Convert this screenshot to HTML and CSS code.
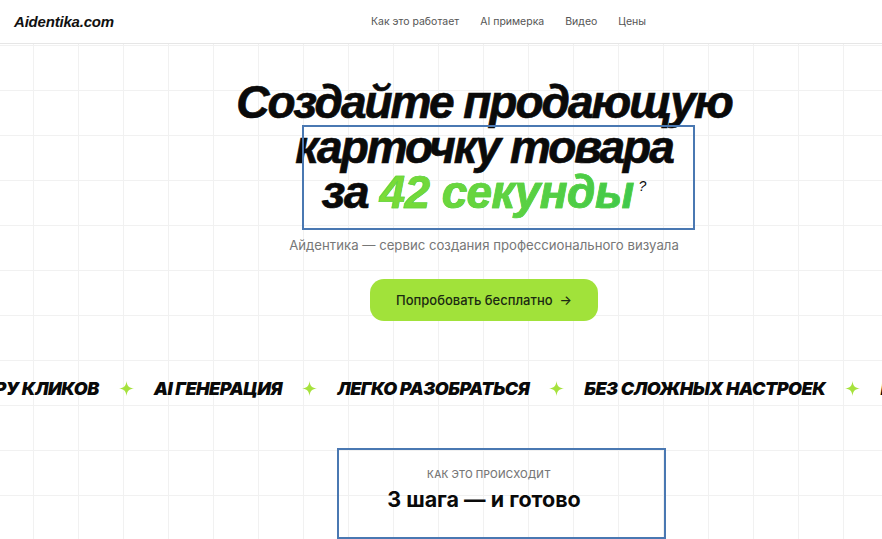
FILE: index.html
```html
<!DOCTYPE html>
<html lang="ru">
<head>
    <meta charset="UTF-8">
    <meta name="viewport" content="width=device-width, initial-scale=1.0">
    <title>Aidentika.com</title>
    <link rel="stylesheet" href="styles.css">
</head>
<body>
    <header class="header">
        <a class="logo" href="#">Aidentika.com</a>
        <nav class="nav">
            <a href="#">Как это работает</a>
            <a href="#">AI примерка</a>
            <a href="#">Видео</a>
            <a href="#">Цены</a>
        </nav>
    </header>

    <main>
        <section class="hero">
            <h1 class="hero-title">
                Создайте продающую<br>
                карточку товара<br>
                <span class="lead">за</span> <span class="accent">42 секунды</span><sup class="q">?</sup>
            </h1>
            <p class="hero-sub">Айдентика — сервис создания профессионального визуала</p>
            <a class="btn" href="#">Попробовать бесплатно <span class="arrow">→</span></a>
        </section>

        <div class="marquee">
            <div class="track">
                <span class="tag">В ПАРУ КЛИКОВ</span>
                <svg class="star" viewBox="0 0 14 14"><path d="M7 0C7.5 4.6 9.4 6.5 14 7C9.4 7.5 7.5 9.4 7 14C6.5 9.4 4.6 7.5 0 7C4.6 6.5 6.5 4.6 7 0Z"/></svg>
                <span class="tag">AI ГЕНЕРАЦИЯ</span>
                <svg class="star" viewBox="0 0 14 14"><path d="M7 0C7.5 4.6 9.4 6.5 14 7C9.4 7.5 7.5 9.4 7 14C6.5 9.4 4.6 7.5 0 7C4.6 6.5 6.5 4.6 7 0Z"/></svg>
                <span class="tag">ЛЕГКО РАЗОБРАТЬСЯ</span>
                <svg class="star" viewBox="0 0 14 14"><path d="M7 0C7.5 4.6 9.4 6.5 14 7C9.4 7.5 7.5 9.4 7 14C6.5 9.4 4.6 7.5 0 7C4.6 6.5 6.5 4.6 7 0Z"/></svg>
                <span class="tag">БЕЗ СЛОЖНЫХ НАСТРОЕК</span>
                <svg class="star" viewBox="0 0 14 14"><path d="M7 0C7.5 4.6 9.4 6.5 14 7C9.4 7.5 7.5 9.4 7 14C6.5 9.4 4.6 7.5 0 7C4.6 6.5 6.5 4.6 7 0Z"/></svg>
                <span class="tag">БЫСТРЫЙ РЕЗУЛЬТАТ</span>
            </div>
        </div>

        <section class="steps">
            <p class="eyebrow">КАК ЭТО ПРОИСХОДИТ</p>
            <h2 class="steps-title">3 шага — и готово</h2>
        </section>
    </main>

    <!-- annotation frames -->
    <div class="frame frame-title"></div>
    <div class="frame frame-steps"></div>
</body>
</html>
```

FILE: styles.css
```css
html, body {
    margin: 0;
    padding: 0;
}
body {
    font-family: Inter, "Liberation Sans", sans-serif;
    color: #111;
    background-color: #fff;
    background-image:
        linear-gradient(to right, #f1f1f1 1px, transparent 1px),
        linear-gradient(to bottom, #f1f1f1 1px, transparent 1px);
    background-size: 45px 45px;
    background-position: 33px 0;
    overflow: hidden;
    height: 539px;
    position: relative;
}
a {
    text-decoration: none;
    color: inherit;
}

/* header */
.header {
    height: 44px;
    display: flex;
    align-items: center;
    padding: 0 14px;
    background: #fff;
    border-bottom: 1px solid #e6e6e6;
    box-sizing: border-box;
}
.logo {
    font-family: "Liberation Sans", Arial, sans-serif;
    font-weight: 700;
    font-style: italic;
    font-size: 15px;
    letter-spacing: -0.2px;
    color: #111;
}
.nav {
    display: flex;
    gap: 21px;
    margin-left: 257px;
    font-size: 10.5px;
    color: #555;
}

/* hero */
.hero {
    display: flex;
    flex-direction: column;
    align-items: center;
    padding: 36px 0 0 86px;
}
.hero-title {
    margin: 0;
    font-family: "Liberation Sans", Arial, sans-serif;
    font-weight: 700;
    font-style: italic;
    font-size: 46px;
    line-height: 45px;
    letter-spacing: -2px;
    -webkit-text-stroke: 0.7px #0a0a0a;
    text-align: center;
    color: #0a0a0a;
}
.lead {
    letter-spacing: -1px;
}
.accent {
    background: linear-gradient(90deg, #7ddc36, #3fc84c);
    -webkit-background-clip: text;
    background-clip: text;
    color: transparent;
    letter-spacing: -0.6px;
    -webkit-text-stroke: 0.7px #5ad242;
}
.q {
    font-size: 14px;
    font-weight: 400;
    letter-spacing: 0;
    -webkit-text-stroke: 0;
    vertical-align: top;
    position: relative;
    top: -6px;
    margin-left: 5px;
}
.hero-sub {
    margin: 22px 0 0;
    font-size: 13.2px;
    color: #777;
}
.btn {
    margin-top: 26px;
    display: flex;
    align-items: center;
    gap: 7px;
    height: 42px;
    padding: 0 26px;
    border-radius: 14px;
    background: #a1e23a;
    color: #1b2a12;
    font-size: 13px;
    font-weight: 500;
}
.arrow {
    font-size: 13px;
}

/* marquee */
.marquee {
    margin-top: 57px;
    overflow: hidden;
    white-space: nowrap;
}
.track {
    display: flex;
    align-items: center;
    gap: 20px;
    transform: translateX(-47px);
}
.tag {
    font-family: Inter, sans-serif;
    font-weight: 900;
    font-style: italic;
    font-size: 18px;
    letter-spacing: -0.5px;
    color: #0a0a0a;
}
.star {
    width: 15px;
    height: 15px;
    fill: #a6e23d;
    flex: none;
}

/* steps */
.steps {
    display: flex;
    flex-direction: column;
    align-items: center;
    padding: 69px 0 0 86px;
}
.eyebrow {
    margin: 0;
    font-size: 10px;
    font-weight: 500;
    color: #777;
    letter-spacing: 0.2px;
    position: relative;
    left: 5px;
}
.steps-title {
    margin: 6px 0 0;
    font-size: 21.5px;
    font-weight: 700;
    color: #0a0a0a;
}

/* annotation frames */
.frame {
    position: absolute;
    border: 2px solid #4a78b2;
    box-sizing: border-box;
}
.frame-title {
    left: 302px;
    top: 125px;
    width: 393px;
    height: 105px;
}
.frame-steps {
    left: 337px;
    top: 448px;
    width: 329px;
    height: 91px;
}
```
